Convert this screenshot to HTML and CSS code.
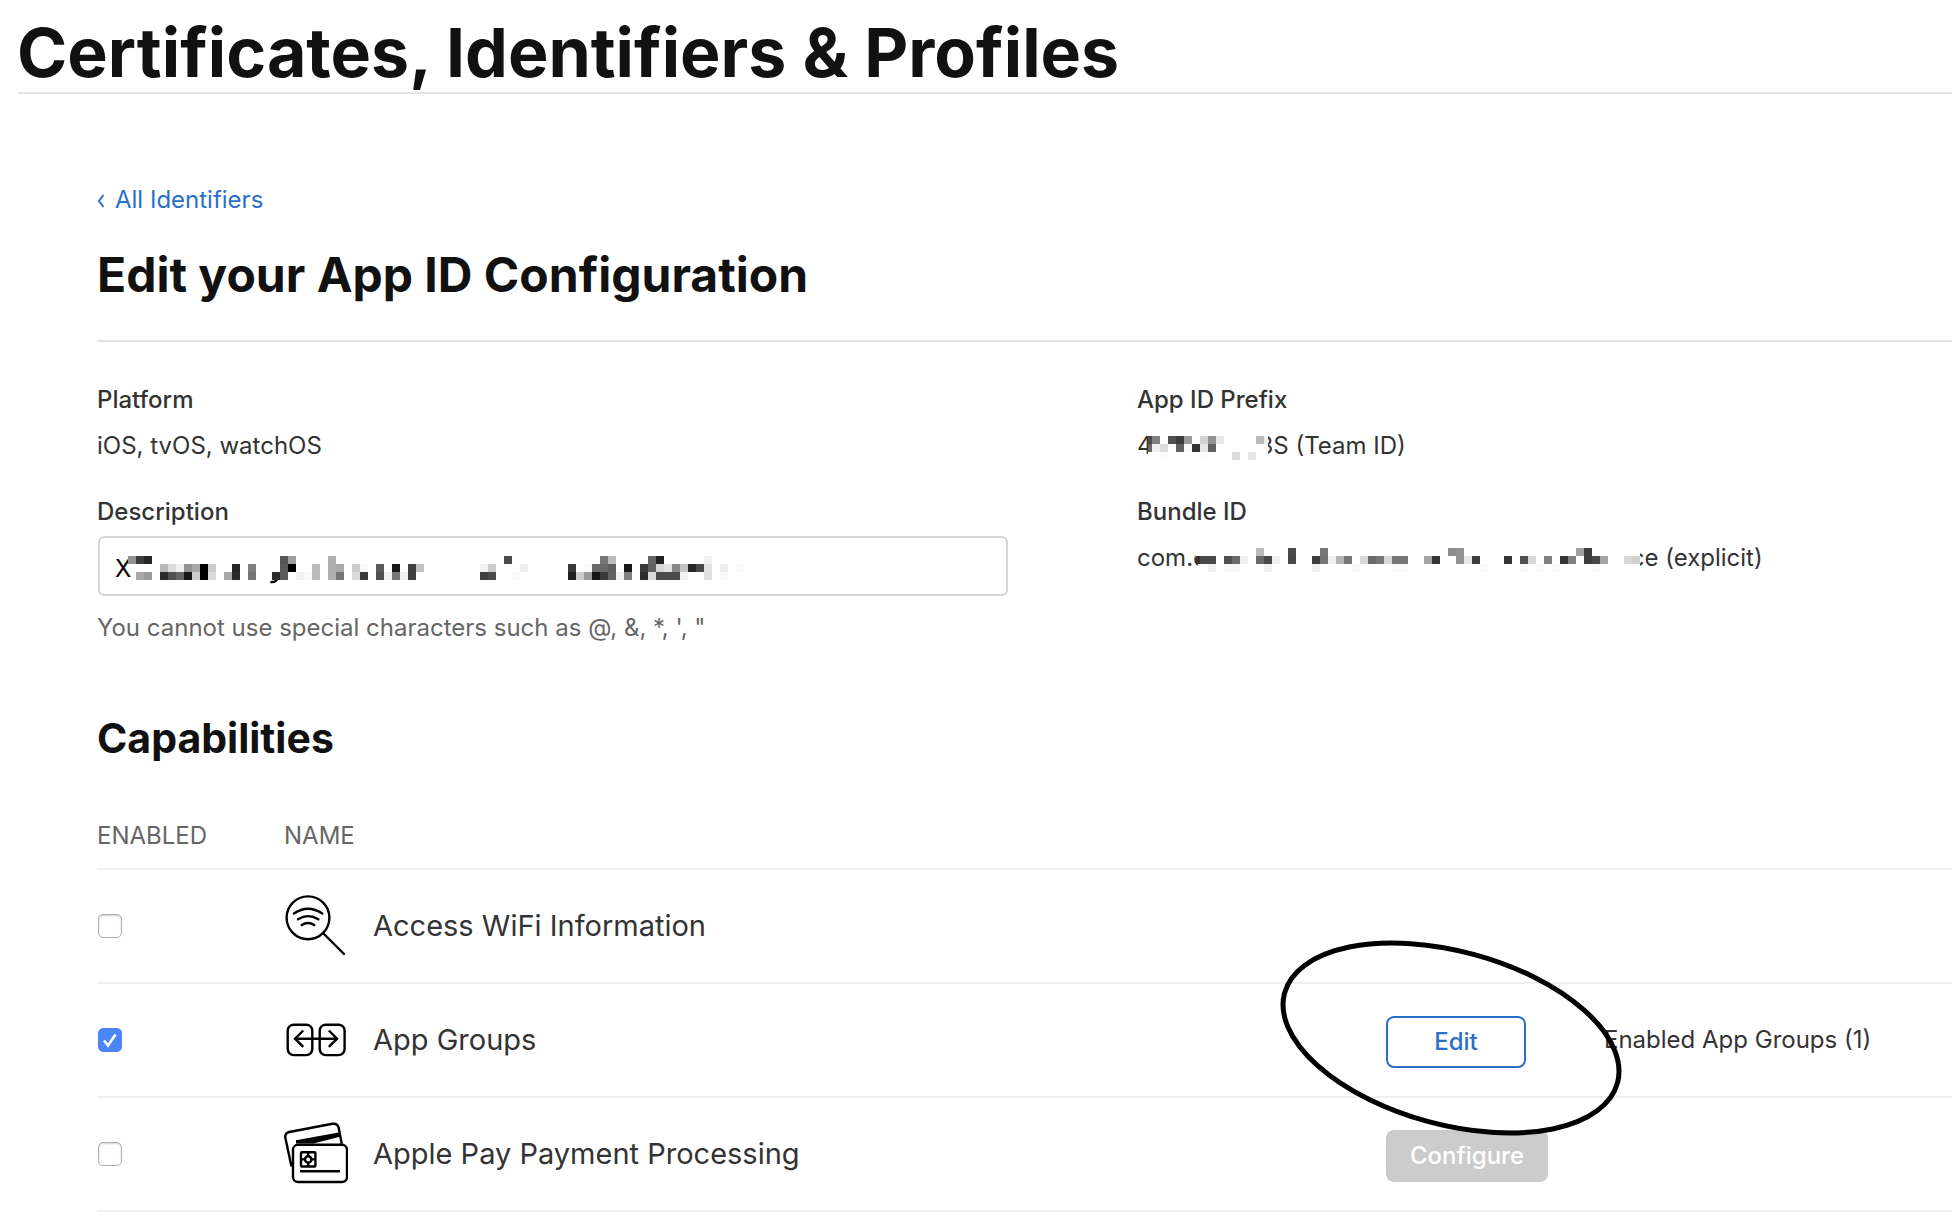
FILE: index.html
```html
<!DOCTYPE html>
<html lang="en">
<head>
<meta charset="utf-8">
<meta name="viewport" content="width=device-width, initial-scale=1">
<title>Certificates, Identifiers &amp; Profiles</title>
<link rel="stylesheet" href="styles.css">
</head>
<body>
<header class="page-header">
  <h1 class="page-title">Certificates, Identifiers &amp; Profiles</h1>
</header>
<main class="content">
  <nav><a class="back-link" href="#identifiers"><svg class="chevron" viewBox="0 0 8 16" aria-hidden="true"><path d="M6.500 3L2 9l4.500 6"/></svg>All Identifiers</a></nav>
  <h2 class="section-title">Edit your App ID Configuration</h2>

  <div class="details">
    <div class="details-column">
      <div class="field">
        <div class="field-label">Platform</div>
        <div class="field-value">iOS, tvOS, watchOS</div>
      </div>
      <div class="field">
        <label class="field-label" for="description">Description</label>
        <div class="input-wrap">
          <input class="text-input" id="description" type="text" value="X">
          <svg class="mosaic mosaic-description" viewBox="0 0 77 4" aria-hidden="true">
            <path class="mosaic-cover" d="M0 0H3v3H2Q.6 2.600 0 1z"/>
            <path class="stroke-end" d="M17.800 3.250q.7.100 1-.6"/>
            <g transform="translate(0 .5)">
              <path stroke="#929292" d="M0 0h1"/><path stroke="#3c3c3c" d="M1 0h1"/><path stroke="#262626" d="M2 0h1"/><path stroke="#555" d="M19 0h1"/><path stroke="#9c9c9c" d="M20 0h1"/><path stroke="#b0b0b0" d="M25 0h1"/><path stroke="#4a4a4a" d="M47 0h1"/><path stroke="#777" d="M59 0h1"/><path stroke="#bbb" d="M60 0h1"/><path stroke="#666" d="M65 0h1"/><path stroke="#202020" d="M66 0h1"/><path stroke="#f2f2f2" d="M72 0h1"/>
            </g>
            <g transform="translate(0 1.500)">
              <path stroke="#b8b8b8" d="M4 0h1"/><path stroke="#dcdcdc" d="M5 0h1"/><path stroke="#f0f0f0" d="M6 0h1"/><path stroke="#929292" d="M7 0h1"/><path stroke="#a8a8a8" d="M8 0h1"/><path stroke="#000" d="M9 0h1M20 0h1"/><path stroke="#ccc" d="M10 0h1M28 0h1M45 0h1"/><path stroke="#262626" d="M13 0h1M70 0h1"/><path stroke="#808080" d="M15 0h1"/><path stroke="#5a5a5a" d="M19 0h1M31 0h1"/><path stroke="#bbb" d="M23 0h1"/><path stroke="#b0b0b0" d="M25 0h1"/><path stroke="#aaa" d="M26 0h1"/><path stroke="#fafafa" d="M29 0h1M57 0h1M76 0h1"/><path stroke="#181818" d="M33 0h1M62 0h1"/><path stroke="#404040" d="M35 0h1"/><path stroke="#c4c4c4" d="M36 0h1M69 0h1"/><path stroke="#f2f2f2" d="M44 0h1"/><path stroke="#eee" d="M49 0h1M74 0h1"/><path stroke="#3a3a3a" d="M55 0h1M64 0h1"/><path stroke="#6a6a6a" d="M58 0h2"/><path stroke="#606060" d="M60 0h1M65 0h1"/><path stroke="#d6d6d6" d="M66 0h1"/><path stroke="#e2e2e2" d="M67 0h1M72 0h1"/><path stroke="#888" d="M68 0h1"/><path stroke="#484848" d="M71 0h1"/>
            </g>
            <g transform="translate(0 2.500)">
              <path stroke="#a8a8a8" d="M1 0h1M12 0h1"/><path stroke="#999" d="M2 0h1M57 0h1"/><path stroke="#2c2c2c" d="M4 0h1M13 0h1M18 0h1M64 0h1"/><path stroke="#505050" d="M5 0h1M31 0h1"/><path stroke="#666" d="M6 0h1"/><path stroke="#161616" d="M7 0h1M58 0h1"/><path stroke="#ccc" d="M8 0h1M56 0h1"/><path stroke="#000" d="M9 0h1"/><path stroke="#dadada" d="M10 0h1M28 0h1M65 0h1"/><path stroke="#757575" d="M15 0h1M26 0h1M33 0h1"/><path stroke="#5a5a5a" d="M19 0h1"/><path stroke="#f2f2f2" d="M21 0h1M32 0h1M34 0h1M61 0h1M69 0h1"/><path stroke="#fafafa" d="M22 0h1M48 0h1M74 0h1"/><path stroke="#bbb" d="M23 0h1"/><path stroke="#b0b0b0" d="M25 0h1"/><path stroke="#3a3a3a" d="M29 0h1M59 0h1"/><path stroke="#404040" d="M35 0h1M44 0h1"/><path stroke="#4a4a4a" d="M45 0h1M66 0h3"/><path stroke="#222" d="M55 0h1"/><path stroke="#626262" d="M60 0h1"/><path stroke="#808080" d="M62 0h1"/><path stroke="#e0e0e0" d="M72 0h1"/>
            </g>
          </svg>
        </div>
        <p class="hint">You cannot use special characters such as @, &amp;, *, ', "</p>
      </div>
    </div>
    <div class="details-column">
      <div class="field">
        <div class="field-label">App ID Prefix</div>
        <div class="field-value redacted">4<svg class="mosaic mosaic-prefix" viewBox="-.5 0 15 3" aria-hidden="true">
            <path class="mosaic-cover" d="M-.5 0h15v3h-15z"/>
            <g transform="translate(0 .5)">
              <path stroke="#4a4a4a" d="M-.5 0h.5"/><path stroke="#808080" d="M0 0h1"/><path stroke="#505050" d="M2 0h1"/><path stroke="#3c3c3c" d="M3 0h1"/><path stroke="#999" d="M4 0h1"/><path stroke="#d2d2d2" d="M6 0h1"/><path stroke="#929292" d="M7 0h1"/><path stroke="#e8e8e8" d="M8 0h1"/><path stroke="#bbb" d="M13 0h1"/><path stroke="#f2f2f2" d="M14 0h.5"/>
            </g>
            <g transform="translate(0 1.500)">
              <path stroke="#666" d="M-.5 0h.5"/><path stroke="#efefef" d="M0 0h1"/><path stroke="#ddd" d="M1 0h1"/><path stroke="#606060" d="M3 0h1M7 0h1"/><path stroke="#fafafa" d="M4 0h1M14 0h.5"/><path stroke="#343434" d="M5 0h1"/><path stroke="#e6e6e6" d="M6 0h1"/>
            </g>
            <g transform="translate(0 2.500)">
              <path stroke="#fcfcfc" d="M1 0h1M6 0h1"/><path stroke="#ddd" d="M10 0h1"/><path stroke="#e4e4e4" d="M12 0h1"/>
            </g>
          </svg>3S (Team ID)</div>
      </div>
      <div class="field">
        <div class="field-label">Bundle ID</div>
        <div class="field-value redacted">com.c<svg class="mosaic mosaic-bundle" viewBox="-1 0 56 3" aria-hidden="true">
            <path class="mosaic-cover" d="M-.5-1H55v4H.4Q-.6 2-.6.500z"/>
            <g transform="translate(0 .5)">
              <path stroke="#bbb" d="M7 0h1"/><path stroke="#4a4a4a" d="M11 0h1"/><path stroke="#777" d="M15 0h1"/><path stroke="#8c8c8c" d="M31 0h1"/><path stroke="#929292" d="M32 0h1"/><path stroke="#a0a0a0" d="M47 0h1"/><path stroke="#3c3c3c" d="M48 0h1"/>
            </g>
            <g transform="translate(0 1.500)">
              <path stroke="#333" d="M-.5 0h.5"/><path stroke="#484848" d="M0 0h2M8 0h1M11 0h1M49 0h1"/><path stroke="#505050" d="M3 0h1M40 0h1"/><path stroke="#6a6a6a" d="M4 0h1M7 0h1M21 0h1"/><path stroke="#f0f0f0" d="M5 0h1M9 0h1M16 0h1"/><path stroke="#3c3c3c" d="M14 0h1M34 0h1M48 0h1"/><path stroke="#757575" d="M15 0h1M18 0h1M22 0h1M24 0h2"/><path stroke="#b4b4b4" d="M17 0h1"/><path stroke="#d8d8d8" d="M20 0h1M23 0h1M41 0h1M53 0h1"/><path stroke="#a4a4a4" d="M28 0h1M50 0h1"/><path stroke="#343434" d="M29 0h1M38 0h1M45 0h1"/><path stroke="#929292" d="M32 0h1"/><path stroke="#e8e8e8" d="M33 0h1"/><path stroke="#808080" d="M43 0h1M46 0h1"/><path stroke="#d0d0d0" d="M54 0h1"/>
            </g>
            <g transform="translate(0 2.500)">
              <path stroke="#f0f0f0" d="M1 0h1M8 0h1M14 0h1"/><path stroke="#f8f8f8" d="M3 0h2M19 0h1M40 0h1"/><path stroke="#fafafa" d="M24 0h2M35 0h1M42 0h1M44 0h1M49 0h1"/>
            </g>
          </svg>ce (explicit)</div>
      </div>
    </div>
  </div>

  <h3 class="capabilities-title" id="capabilities">Capabilities</h3>
  <table class="capabilities" aria-labelledby="capabilities">
    <colgroup><col class="col-enabled"><col class="col-name"><col class="col-action"><col class="col-status"></colgroup>
    <thead>
      <tr><th scope="col">ENABLED</th><th scope="col">NAME</th><td></td><td></td></tr>
    </thead>
    <tbody>
      <tr>
        <td><input class="checkbox" type="checkbox" id="cap-wifi"></td>
        <td><label class="capability" for="cap-wifi">
          <svg class="icon" viewBox="0 0 64 64" aria-hidden="true"><g stroke-linecap="round"><circle cx="24" cy="23.800" r="21.400"/><path d="M39.500 39.500L60 60M10 19.600Q24 10 38.300 19.600M14 25.300Q24 19 34.300 25.300M17.700 31Q24 27 30.300 31"/></g></svg>
          Access WiFi Information</label></td>
        <td></td>
        <td></td>
      </tr>
      <tr>
        <td><input class="checkbox" type="checkbox" id="cap-groups" checked></td>
        <td><label class="capability" for="cap-groups">
          <svg class="icon" viewBox="0 0 64 64" aria-hidden="true"><rect x="3.700" y="16.700" width="24.600" height="30.400" rx="6"/><rect x="35.700" y="16.700" width="24.900" height="30.400" rx="6"/><path d="M11 30.700H53M19.300 22.500L11 30.700l8.300 8.200M44.800 22.500l8.300 8.200-8.300 8.200"/></svg>
          App Groups</label></td>
        <td class="action"><div class="annotated">
          <button class="button button-outline" type="button">Edit</button>
          <svg class="annotation" viewBox="0 0 342 196" aria-hidden="true"><ellipse cx="171" cy="98" rx="172.400" ry="86.700" transform="rotate(15.100 171 98)"/></svg>
        </div></td>
        <td class="status">Enabled App Groups (1)</td>
      </tr>
      <tr>
        <td><input class="checkbox" type="checkbox" id="cap-pay"></td>
        <td><label class="capability" for="cap-pay">
          <svg class="icon" viewBox="0 0 64 64" aria-hidden="true"><path d="M7.500 44.500L1.300 15.500Q.8 11 5.300 10L48.500 1.800Q53.500 1 54.600 5.500L57.800 22"/><path class="icon-fill" d="M12 18.200L56 10.200V14.800L29.500 21.500H12z"/><rect x="9" y="22.800" width="54" height="37.200" rx="5"/><rect x="17" y="30.300" width="14.400" height="14.200" rx="1"/><circle cx="24.200" cy="37.400" r="3.200"/><path d="M24.200 30v4M24.200 40.600v4M17 37.400h4M27.400 37.400h4M16 49.200H56"/></svg>
          Apple Pay Payment Processing</label></td>
        <td class="action"><button class="button" type="button" disabled>Configure</button></td>
        <td></td>
      </tr>
    </tbody>
  </table>
</main>
</body>
</html>
```
FILE: styles.css
```css
*, *::before, *::after { box-sizing: border-box; }

body {
  margin: 0;
  background: #fff;
  color: #333;
  font-family: Inter, "Liberation Sans", sans-serif;
  font-size: 24px;
  line-height: 32px;
}

h1, h2, h3, p { margin: 0; color: #111; font-weight: 700; }

.page-header {
  margin-left: 18px;
  padding-top: 12px;
  border-bottom: 2px solid #e3e3e3;
}
.page-title { margin-left: -1px; font-size: 68px; line-height: 80px; }

.content { padding: 90px 0 0 97px; }

nav { display: flex; }
.back-link {
  display: flex;
  align-items: center;
  gap: 10px;
  color: #2a70c8;
  text-decoration: none;
}
.chevron {
  width: 8px;
  height: 16px;
  fill: none;
  stroke: currentColor;
  stroke-width: 2;
}

.section-title {
  margin-top: 31px;
  padding-bottom: 37px;
  border-bottom: 2px solid #e3e3e3;
  font-size: 48px;
  line-height: 56px;
}

.details {
  display: grid;
  grid-template-columns: 1040fr 815fr;
  margin-top: 42px;
}
.details-column { display: flex; flex-direction: column; gap: 34px; }
.field { display: flex; flex-direction: column; }
.field-label { font-weight: 500; }
.field-value { margin-top: 14px; }

.input-wrap { position: relative; margin: 8px 129px 0 1px; }
.text-input {
  display: block;
  width: 100%;
  height: 60px;
  padding: 4px 15px 0;
  border: 2px solid #d6d6d6;
  border-radius: 6px;
  background: #fff;
  color: #000;
  font: inherit;
}
.hint { margin-top: 16px; color: #666; font-weight: 400; }

.mosaic { flex: none; fill: none; stroke-width: 1; shape-rendering: crispEdges; pointer-events: none; }
.mosaic-cover { fill: #fff; stroke: none; shape-rendering: auto; }
.stroke-end { stroke: #000; stroke-width: .3; shape-rendering: auto; }
.mosaic-description { position: absolute; left: 30px; top: 20px; width: 616px; height: 32px; }
.redacted { display: flex; align-items: center; height: 32px; }
.mosaic-prefix { z-index: 1; width: 120px; height: 24px; margin: 4px -9px 0 -5px; }
.mosaic-bundle { z-index: 1; width: 448px; height: 24px; margin: 4px -9px 0 -15px; overflow: visible; }

.capabilities-title { margin-top: 70px; font-size: 41px; line-height: 48px; }

.capabilities {
  width: 100%;
  margin-top: 58px;
  table-layout: fixed;
  border-spacing: 0;
}
.capabilities th, .capabilities td { padding: 0; border-bottom: 2px solid #f0f0f0; text-align: left; }
.capabilities th { padding-bottom: 16px; color: #666; font-weight: 400; }
.capabilities tbody td { height: 114px; vertical-align: middle; }
.capabilities .action { padding-top: 4px; }
.col-enabled { width: 187px; }
.col-action { width: 218px; }
.col-status { width: 348px; }

.checkbox {
  display: block;
  width: 24px;
  height: 24px;
  margin: 0 0 0 1px;
  appearance: none;
  border: 1px solid #b0b0b0;
  border-radius: 5px;
  background: #fff;
  box-shadow: inset 0 1px 2px #ccc;
}
.checkbox:checked {
  border-color: #4a86f5;
  background: #4a86f5 url("data:image/svg+xml,%3Csvg xmlns='http://www.w3.org/2000/svg' viewBox='0 0 22 22'%3E%3Cpath d='M5 11.500L9 16.500L16.500 5.500' fill='none' stroke='white' stroke-width='2.600'/%3E%3C/svg%3E") center / 22px no-repeat;
  box-shadow: none;
}

.capability { display: flex; align-items: center; gap: 25px; font-size: 29px; line-height: 40px; }
.icon { flex: none; width: 64px; height: 64px; fill: none; stroke: #000; stroke-width: 2.4; }
.icon-fill { fill: #000; stroke: none; }

.button {
  display: block;
  height: 52px;
  padding: 0 24px;
  border: 0;
  border-radius: 8px;
  background: #ccc;
  color: #fff;
  font: inherit;
  font-weight: 500;
}
.button-outline {
  width: 140px;
  border: 2px solid #2a70c8;
  background: #fff;
  color: #2a70c8;
}
.annotated { position: relative; }
.annotation {
  position: absolute;
  z-index: 1;
  left: -106px;
  top: -76px;
  width: 342px;
  height: 196px;
  overflow: visible;
  fill: none;
  stroke: #000;
  stroke-width: 5;
  pointer-events: none;
}
```
